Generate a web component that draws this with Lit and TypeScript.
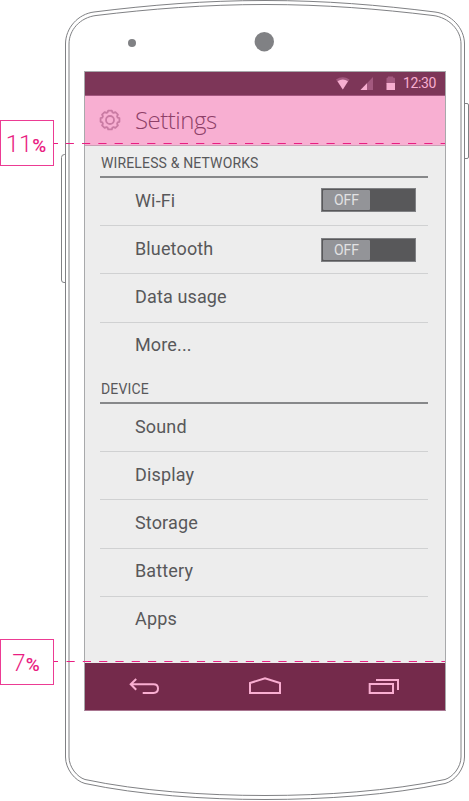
import { LitElement, html, css, svg, nothing } from "lit";
import { customElement, property } from "lit/decorators.js";

const GEAR = (() => {
  const teeth = 8;
  const points: string[] = [];
  for (let i = 0; i < teeth; i++) {
    const a = (i / teeth) * Math.PI * 2 - Math.PI / 2;
    for (const [offset, r] of [[-0.3, 8], [-0.19, 9.6], [0.19, 9.6], [0.3, 8]]) {
      points.push(`${(11 + Math.cos(a + offset) * r).toFixed(2)} ${(11 + Math.sin(a + offset) * r).toFixed(2)}`);
    }
  }
  return `M${points.join("L")}Z`;
})();

@customElement("phone-frame")
class PhoneFrame extends LitElement {
  static styles = css`
    :host { display: block; }
    svg { display: block; }
    .line { fill: none; stroke: #808184; stroke-width: 1; }
    .dot { fill: #808184; }
  `;
  render() {
    return html`<svg width="469" height="801" viewBox="0 0 469 801">
      <path class="line" d="M65.5 157V155.5Q65.5 154.5 64.5 154.5Q61.5 154.5 61.5 157.5V280Q61.5 282.5 64 282.5H65.5" />
      <path class="line" d="M465 103.5H467Q468.5 103.5 468.5 105V157Q468.5 158.5 467 158.5H465" />
      <path class="line" d="M65.5 44C65.5 28 78 14 94 12C150 5 205 .5 265 .5S379 5 435 12C451 14 464.500 28 464.500 44V757C464.500 769 455 781 445 783.500C390 795 325 799.500 265 799.500S139 795 85 783.500C75 781 65.500 769 65.500 757Z" />
      <path class="line" d="M69 44C69 30 80 17.500 96 15.500C150 9 205 4.500 265 4.500S379 9 433 15.500C449 17.500 461 30 461 44V757C461 767 453 777 445 779.500C390 791 325 795.500 265 795.500S139 791 85 779.500C77 777 69 767 69 757Z" />
      <circle class="dot" cx="132" cy="43" r="4" />
      <circle class="dot" cx="264.300" cy="41.700" r="9.700" />
    </svg>`;
  }
}

@customElement("status-bar")
class StatusBar extends LitElement {
  static styles = css`
    :host {
      display: flex; align-items: center; height: 24px; box-sizing: border-box;
      padding-left: 250px; background: #7d3658; color: #f7aed0;
      border-bottom: 1px solid #a3567e;
      font: 14px/23px Roboto, sans-serif;
    }
    svg { display: block; flex: none; }
    .dim { fill: #a3597f; }
    .lit { fill: #f7aed0; }
    .time { margin-left: 4px; letter-spacing: -.4px; }
  `;
  render() {
    return html`<svg width="64" height="23" viewBox="335 72 64 23">
        <path class="dim" d="M336 79.500Q342.800 75 349.500 79.500L342.800 89.500Z" />
        <path class="lit" d="M337.500 81.200Q342.800 78 348 81.200L342.800 89.500Z" />
        <path class="dim" d="M373 77V90H360.500Z" />
        <path class="lit" d="M367 83.300V90H360.500Z" />
        <path class="dim" d="M386.500 78.500Q386.500 77.500 388 77.500V76.500H393V77.500Q395 77.500 395 78.500V84H386.500Z" />
        <rect class="lit" x="386.500" y="83" width="8.500" height="7" />
      </svg><span class="time">12:30</span>`;
  }
}

@customElement("toggle-switch")
class ToggleSwitch extends LitElement {
  static styles = css`
    :host {
      display: block; width: 95px; height: 24px; box-sizing: border-box;
      padding: 1px; border: 1px solid #808184; background: #58585a;
    }
    .thumb {
      width: 47px; height: 20px; box-sizing: border-box; border-radius: 1px;
      background: #939498; color: #e2e2e3; text-align: center;
      font: 14px/21px Roboto, sans-serif; letter-spacing: 0;
    }
  `;
  render() {
    return html`<div class="thumb">OFF</div>`;
  }
}

interface Item { label: string; toggle?: boolean }

@customElement("settings-section")
class SettingsSection extends LitElement {
  @property() heading = "";
  @property({ attribute: false }) items: Item[] = [];
  static styles = css`
    :host { display: block; color: #58585a; font-family: Roboto, sans-serif; }
    .heading {
      height: 32px; box-sizing: border-box; padding: 7px 0 0 1px;
      border-bottom: 2px solid #87888a; font-size: 14px; line-height: 20px;
      letter-spacing: .14px;
    }
    .row {
      display: flex; justify-content: space-between; height: 48.200px; box-sizing: border-box;
      padding: 9.500px 12px 0 35px; border-bottom: 1px solid #d0d1d2;
      font-size: 18px; line-height: 26px; letter-spacing: .14px;
    }
    .row:last-child { border-bottom: 0; }
    .row + .row toggle-switch { margin-top: 2px; }
  `;
  render() {
    return html`<div class="heading">${this.heading}</div>
      ${this.items.map((item) => html`<div class="row">
        <span>${item.label}</span>
        ${item.toggle ? html`<toggle-switch></toggle-switch>` : nothing}
      </div>`)}`;
  }
}

@customElement("nav-bar")
class NavBar extends LitElement {
  static styles = css`
    :host {
      display: flex; justify-content: space-between; align-items: flex-start;
      height: 47px; box-sizing: border-box; padding: 13px 44px 0;
      background: #742a4b;
    }
    svg { display: block; fill: none; stroke: #f9aed1; stroke-width: 2; }
  `;
  render() {
    return html`<svg width="32" height="20" viewBox="129 676 32 20">
        <path d="M136.200 679L130.700 684.200L136.200 689.800M130.700 684.200H153.500Q158 684.200 158 688.500T153.500 693H142.700" />
      </svg>
      <svg width="34" height="20" viewBox="248 676 34 20">
        <path d="M250 693V683L265 678.300L280 683V693Z" />
      </svg>
      <svg width="33" height="20" viewBox="368 676 33 20">
        <path d="M369.700 684H393V693H369.700ZM376 680H398V690" />
      </svg>`;
  }
}

@customElement("app-root")
class AppRoot extends LitElement {
  static styles = css`
    :host {
      display: block; position: relative; width: 469px; height: 801px;
      overflow: hidden; background: #fff;
    }
    phone-frame, .guides { position: absolute; top: 0; left: 0; }
    .device { position: relative; padding: 71px 0 0 84px; }
    .screen {
      display: flex; flex-direction: column; width: 362px; height: 640px;
      box-sizing: border-box; border: 1px solid #a8a9ab; border-bottom-color: #a97590;
      background: #ededed;
    }
    .title {
      display: flex; align-items: center; height: 50px; box-sizing: border-box; flex: none;
      padding-left: 14px; gap: 14px; background: #f8afd2; color: #8e3f68;
      border-bottom: 1px solid #c9a0b5;
      font: 300 24px/48px "Open Sans", sans-serif; letter-spacing: -.5px;
    }
    .title svg { display: block; margin-top: -2px; fill: none; stroke: #c97ba3; stroke-width: 1.800; stroke-linejoin: round; }
    .title span { margin-top: -2px; }
    .list { flex: 1; padding: 0 17px 0 15px; }
    .wireless { height: 226px; }
    .guides .dash { fill: none; stroke: #e91e82; stroke-width: 1; stroke-dasharray: 8.200 8.100; }
    .callout {
      position: absolute; left: 0; width: 54px; height: 46px; box-sizing: border-box;
      padding-right: 2px; border: 1px solid #ec3b93; background: #fff; color: #e91e82;
      display: flex; align-items: baseline; justify-content: center;
      font: 300 24px/46px Roboto, sans-serif;
    }
    .callout b { font-size: 19px; font-weight: 500; }
    .top { top: 120px; }
    .bottom { top: 639px; }
  `;
  render() {
    return html`
      <phone-frame></phone-frame>
      <div class="device">
        <div class="screen">
          <status-bar></status-bar>
          <div class="title">
            <svg width="22" height="22" viewBox="0 0 22 22">${svg`<path d=${GEAR} /><circle cx="11" cy="11" r="4" />`}</svg>
            <span>Settings</span>
          </div>
          <div class="list">
            <settings-section class="wireless" heading="WIRELESS &amp; NETWORKS" .items=${[
              { label: "Wi-Fi", toggle: true },
              { label: "Bluetooth", toggle: true },
              { label: "Data usage" },
              { label: "More..." },
            ]}></settings-section>
            <settings-section heading="DEVICE" .items=${[
              { label: "Sound" }, { label: "Display" }, { label: "Storage" },
              { label: "Battery" }, { label: "Apps" },
            ]}></settings-section>
          </div>
          <nav-bar></nav-bar>
        </div>
      </div>
      <svg class="guides" width="469" height="801" viewBox="0 0 469 801">
        <path class="dash" d="M54 143.500H58M65.700 143.500H445" />
        <path class="dash" d="M54 661.500H58M66.500 661.500H445" />
      </svg>
      <div class="callout top"><span>11</span><b>%</b></div>
      <div class="callout bottom"><span>7</span><b>%</b></div>
    `;
  }
}
